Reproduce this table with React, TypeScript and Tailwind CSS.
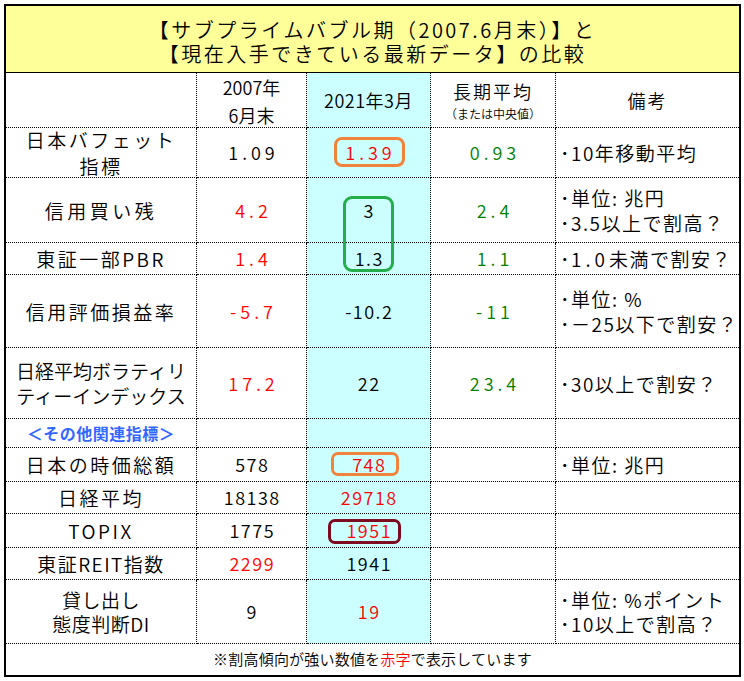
import React from 'react';

const R = 'text-[#ff0000]';
const G = 'text-[#008000]';
const K = 'text-black';
const W = 'tracking-[4px] pl-[4px]';
const N = 'tracking-[1.5px] pl-[1.5px]';

type Val = [string, string, string];

interface Row {
    label: string[];
    track: string;
    lh: string;
    a: Val;
    b: Val;
    c: Val;
    note: React.ReactNode[];
}

const rows: Row[] = [
    { label: ['日本バフェット', '指標'], track: 'tracking-[2.5px]', lh: 'leading-[26px]', a: ['1.09', K, W], b: ['1.39', R, W], c: ['0.93', G, W], note: ['･10年移動平均'] },
    { label: ['信用買い残'], track: 'tracking-[3.5px]', lh: 'leading-[25px]', a: ['4.2', R, W], b: ['3', K, N], c: ['2.4', G, W], note: ['･単位: 兆円', '･3.5以上で割高？'] },
    {
        label: ['東証一部PBR'], track: 'tracking-[2.5px]', lh: 'leading-[25px]', a: ['1.4', R, W], b: ['1.3', K, N], c: ['1.1', G, W],
        note: [<span key="pbr">･<span className="tracking-[4px]">1.0</span>未満で割安？</span>],
    },
    { label: ['信用評価損益率'], track: 'tracking-[2.5px]', lh: 'leading-[25px]', a: ['-5.7', R, W], b: ['-10.2', K, N], c: ['-11', G, W], note: ['･単位: %', '･－25以下で割安？'] },
    { label: ['日経平均ボラティリ', 'ティーインデックス'], track: 'tracking-[0px]', lh: 'leading-[25px]', a: ['17.2', R, W], b: ['22', K, N], c: ['23.4', G, W], note: ['･30以上で割安？'] },
];

const rows2: Row[] = [
    { label: ['日本の時価総額'], track: 'tracking-[2.5px]', lh: 'leading-[25px]', a: ['578', K, N], b: ['748', R, N], c: ['', K, N], note: ['･単位: 兆円'] },
    { label: ['日経平均'], track: 'tracking-[2.5px]', lh: 'leading-[25px]', a: ['18138', K, N], b: ['29718', R, N], c: ['', K, N], note: [] },
    { label: ['TOPIX'], track: 'tracking-[2.5px]', lh: 'leading-[25px]', a: ['1775', K, N], b: ['1951', R, N], c: ['', K, N], note: [] },
    { label: ['東証REIT指数'], track: 'tracking-[1.5px]', lh: 'leading-[25px]', a: ['2299', R, N], b: ['1941', K, N], c: ['', K, N], note: [] },
    { label: ['貸し出し', '態度判断DI'], track: 'tracking-[0.5px]', lh: 'leading-[24px]', a: ['9', K, N], b: ['19', R, N], c: ['', K, N], note: ['･単位: %ポイント', '･10以上で割高？'] },
];

const cell = 'border-r border-b border-dotted border-black flex items-center justify-center';
const lastCell = 'border-b border-dotted border-black flex flex-col justify-center pl-[4px]';

const RowCells: React.FC<{ row: Row }> = ({ row }) => (
    <>
        <div className={`${cell} flex-col text-[19px] ${row.lh} ${row.track}`}>
            {row.label.map((l) => (
                <div key={l}>{l}</div>
            ))}
        </div>
        <div className={`${cell} text-[18px] ${row.a[1]} ${row.a[2]}`}>{row.a[0]}</div>
        <div className={`${cell} bg-[#ccffff] text-[18px] ${row.b[1]} ${row.b[2]}`}>{row.b[0]}</div>
        <div className={`${cell} text-[18px] ${row.c[1]} ${row.c[2]}`}>{row.c[0]}</div>
        <div className={`${lastCell} text-[19px] tracking-[1.5px] ${row.lh}`}>
            {row.note.map((n, i) => (
                <div key={i} className="whitespace-nowrap">{n}</div>
            ))}
        </div>
    </>
);

const App: React.FC = () => {
    return (
        <div className="relative w-[744px] h-[681px] bg-white text-black font-[350] font-['Noto_Sans_CJK_JP','Noto_Sans',sans-serif] overflow-hidden">
            <div className="ml-[4px] pt-[4px]">
                <div className="w-[737px] border-2 border-black">

                    {/* Title */}
                    <div className="h-[67px] bg-[#ffff99] border-b border-black flex flex-col items-center justify-center pt-[6px] text-[20px] leading-[24px] tracking-[2.5px]">
                        <div>【サブプライムバブル期（2007.6月末）】と</div>
                        <div>【現在入手できている最新データ】の比較</div>
                    </div>

                    {/* Table body */}
                    <div className="grid grid-cols-[191px_110px_124px_125px_183px] grid-rows-[55px_50px_65px_32px_73px_71px_29px_34px_32px_34px_32px_64px]">
                        <div className={cell}></div>
                        <div className={`${cell} flex-col text-[18px] leading-[28px] pt-[2px]`}>
                            <div>2007年</div>
                            <div>6月末</div>
                        </div>
                        <div className={`${cell} bg-[#ccffff] text-[18px] tracking-[0.5px]`}>2021年3月</div>
                        <div className={`${cell} flex-col pt-[2px]`}>
                            <div className="text-[18px] leading-[26px] tracking-[2px]">長期平均</div>
                            <div className="text-[12px] leading-[20px]">（または中央値）</div>
                        </div>
                        <div className="border-b border-dotted border-black flex items-center justify-center text-[18px] tracking-[2px]">備考</div>

                        {rows.map((r) => (
                            <RowCells key={r.label[0]} row={r} />
                        ))}

                        {/* Section heading */}
                        <div className={`${cell} text-[16px] font-bold text-[#3366ff] tracking-[0.5px]`}>＜その他関連指標＞</div>
                        <div className={cell}></div>
                        <div className={`${cell} bg-[#ccffff]`}></div>
                        <div className={cell}></div>
                        <div className="border-b border-dotted border-black"></div>

                        {rows2.map((r) => (
                            <RowCells key={r.label[0]} row={r} />
                        ))}
                    </div>

                    {/* Footer */}
                    <div className="h-[31px] flex items-center justify-center text-[15px] tracking-[0.2px]">
                        ※割高傾向が強い数値を<span className="text-[#ff0000]">赤字</span>で表示しています
                    </div>
                </div>
            </div>

            {/* Highlight frames drawn over the table */}
            <div className="absolute left-[334px] top-[137px] w-[71px] h-[30px] border-[3px] border-[#f0843a] rounded-[8px]" />
            <div className="absolute left-[343px] top-[196px] w-[51px] h-[76px] border-[3px] border-[#25ad4b] rounded-[9px]" />
            <div className="absolute left-[331px] top-[452px] w-[68px] h-[24px] border-[3px] border-[#f0843a] rounded-[7px]" />
            <div className="absolute left-[328px] top-[519px] w-[73px] h-[25px] border-[3px] border-[#7d0a1f] rounded-[7px]" />
        </div>
    );
};

export default App;
